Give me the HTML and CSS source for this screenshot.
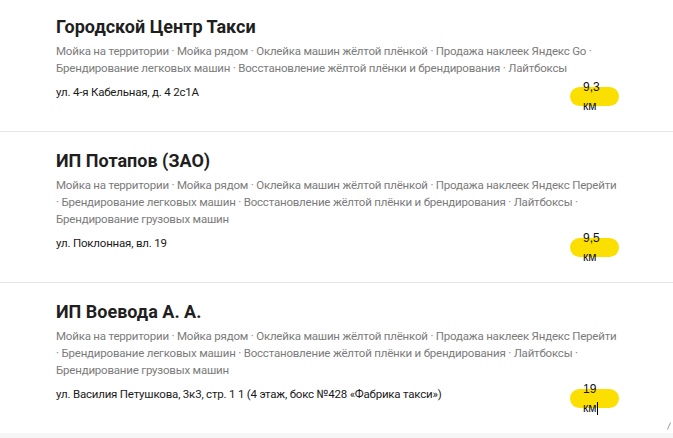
FILE: index.html
```html
<!DOCTYPE html>
<html lang="ru">
<head>
<meta charset="utf-8">
<title>Сервисы</title>
<link rel="stylesheet" href="styles.css">
</head>
<body>
<div class="list">
  <div class="card card-first">
    <div class="title">Городской Центр Такси</div>
    <div class="services">Мойка на территории · Мойка рядом · Оклейка машин жёлтой плёнкой · Продажа наклеек Яндекс Go ·<br>Брендирование легковых машин · Восстановление жёлтой плёнки и брендирования · Лайтбоксы</div>
    <div class="bottom">
      <div class="address">ул. 4-я Кабельная, д. 4 2с1А</div>
      <div class="pill"><span class="dist">9,3 км</span></div>
    </div>
  </div>
  <div class="card">
    <div class="title">ИП Потапов (ЗАО)</div>
    <div class="services">Мойка на территории · Мойка рядом · Оклейка машин жёлтой плёнкой · Продажа наклеек Яндекс Перейти<br>· Брендирование легковых машин · Восстановление жёлтой плёнки и брендирования · Лайтбоксы ·<br>Брендирование грузовых машин</div>
    <div class="bottom">
      <div class="address">ул. Поклонная, вл. 19</div>
      <div class="pill"><span class="dist">9,5 км</span></div>
    </div>
  </div>
  <div class="card card-last">
    <div class="title">ИП Воевода А. А.</div>
    <div class="services">Мойка на территории · Мойка рядом · Оклейка машин жёлтой плёнкой · Продажа наклеек Яндекс Перейти<br>· Брендирование легковых машин · Восстановление жёлтой плёнки и брендирования · Лайтбоксы ·<br>Брендирование грузовых машин</div>
    <div class="bottom">
      <div class="address">ул. Василия Петушкова, 3к3, стр. 1 1 (4 этаж, бокс №428 «Фабрика такси»)</div>
      <div class="pill"><span class="dist">19 км<span class="caret"></span></span></div>
    </div>
    <svg class="grip" width="4" height="8" viewBox="0 0 4 8"><path d="M0.5 7.5 L3.5 0.5" stroke="#9a9a9a" stroke-width="1" fill="none"/></svg>
  </div>
</div>
</body>
</html>
```
FILE: styles.css
```css
html, body {
  margin: 0;
  padding: 0;
}
body {
  background: #f6f6f6;
  font-family: Roboto, "Noto Sans", Arial, sans-serif;
  color: #000;
  overflow: hidden;
}
.list {
  margin-top: -2px;
}
.card {
  position: relative;
  background: #fff;
  border-bottom: 1px solid #e6e6e6;
  padding: 17px 54px 25px 56px;
}
.card-last {
  border-bottom: none;
}
.title {
  font-size: 18px;
  line-height: 24px;
  font-weight: 700;
  color: #1f1f1f;
}
.services {
  margin-top: 4px;
  font-size: 11.5px;
  letter-spacing: -0.2px;
  line-height: 17px;
  color: #7b7b7b;
  white-space: nowrap;
}
.bottom {
  display: flex;
  align-items: flex-start;
  margin-top: 7px;
}
.address {
  flex: 1;
  font-size: 11.5px;
  letter-spacing: -0.2px;
  line-height: 17px;
  color: #1a1a1a;
}
.pill {
  margin-top: 3px;
  width: 49px;
  height: 19px;
  box-sizing: border-box;
  padding: 1px 13px 0;
  border-radius: 10px;
  background: #fadf00;
  display: flex;
  align-items: center;
}
.dist {
  display: block;
  width: 23px;
  font-family: "Liberation Sans", Arial, sans-serif;
  font-size: 12px;
  line-height: 19px;
  color: #111;
}
.caret {
  display: inline-block;
  width: 1px;
  height: 13px;
  background: #000;
  vertical-align: -3px;
}
.grip {
  position: absolute;
  right: 2px;
  bottom: 3px;
}
```
